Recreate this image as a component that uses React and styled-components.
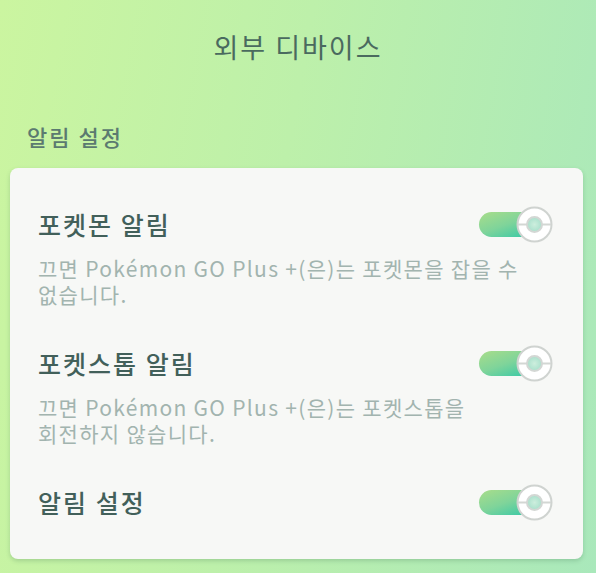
import React from "react";
import styled, { createGlobalStyle } from "styled-components";

const Global = createGlobalStyle`
  html, body { margin: 0; padding: 0; }
  body {
    width: 596px;
    height: 573px;
    overflow: hidden;
    font-family: "Noto Sans CJK KR", "Noto Sans", sans-serif;
    background: linear-gradient(100deg, #cbf5a0 0%, #bdf0aa 45%, #a9e8bb 100%);
  }
`;

const Page = styled.div`
  width: 596px;
  height: 573px;
  display: flex;
  flex-direction: column;
  box-sizing: border-box;
  padding-top: 29px;
`;

const Title = styled.h1`
  margin: 0;
  font-size: 27px;
  font-weight: 400;
  line-height: 36px;
  text-align: center;
  color: #4a6a5f;
  letter-spacing: 2px;
`;

const SectionLabel = styled.div`
  margin: 57px 0 0 27px;
  font-size: 22px;
  font-weight: 500;
  line-height: 28px;
  color: #5b7a70;
  letter-spacing: 2px;
`;

const Card = styled.div`
  margin: 18px 13px 0 10px;
  background: #f7f8f6;
  border-radius: 8px;
  box-shadow: 0 2px 4px rgba(60, 110, 80, 0.25);
  padding: 40px 30px 41px 28px;
  display: flex;
  flex-direction: column;
  gap: 40px;
`;

const Row = styled.div`
  display: flex;
  flex-direction: column;
`;

const RowHead = styled.div`
  display: flex;
  align-items: center;
  justify-content: space-between;
  height: 32px;
`;

const RowTitle = styled.div`
  font-size: 25px;
  font-weight: 500;
  line-height: 32px;
  color: #42605a;
  letter-spacing: 2px;
`;

const Desc = styled.div`
  margin-top: 15px;
  font-size: 21px;
  line-height: 26px;
  color: #a2b4af;
  letter-spacing: 1.3px;
`;

const ToggleWrap = styled.div`
  position: relative;
  width: 74px;
  height: 32px;
  flex-shrink: 0;
`;

const Track = styled.div`
  position: absolute;
  left: 0;
  top: 4px;
  width: 54px;
  height: 25px;
  border-radius: 13px;
  background: linear-gradient(160deg, #a9dd8a 0%, #7fd49a 50%, #33c8a8 100%);
`;

const Knob = styled.svg`
  position: absolute;
  right: 0;
  top: -2px;
`;

function Toggle() {
  return (
    <ToggleWrap>
      <Track />
      <Knob width="37" height="37" viewBox="0 0 37 37">
        <defs>
          <radialGradient id="kc" cx="50%" cy="50%" r="50%">
            <stop offset="0%" stopColor="#cdeedd" />
            <stop offset="100%" stopColor="#a9e0cc" />
          </radialGradient>
        </defs>
        <circle cx="18.5" cy="18.5" r="17" fill="#ffffff" stroke="#cfd3d0" strokeWidth="2" />
        <line x1="2" y1="18.5" x2="35" y2="18.5" stroke="#d3d7d4" strokeWidth="2" />
        <circle cx="18.5" cy="18.5" r="7.5" fill="url(#kc)" stroke="#d3d7d4" strokeWidth="2" />
      </Knob>
    </ToggleWrap>
  );
}

const rows = [
  {
    title: "포켓몬 알림",
    desc: ["끄면 Pokémon GO Plus +(은)는 포켓몬을 잡을 수", "없습니다."],
  },
  {
    title: "포켓스톱 알림",
    desc: ["끄면 Pokémon GO Plus +(은)는 포켓스톱을", "회전하지 않습니다."],
  },
  { title: "알림 설정" },
];

export default function App() {
  return (
    <Page>
      <Global />
      <Title>외부 디바이스</Title>
      <SectionLabel>알림 설정</SectionLabel>
      <Card>
        {rows.map((r) => (
          <Row key={r.title}>
            <RowHead>
              <RowTitle>{r.title}</RowTitle>
              <Toggle />
            </RowHead>
            {r.desc && (
              <Desc>
                {r.desc[0]}
                <br />
                {r.desc[1]}
              </Desc>
            )}
          </Row>
        ))}
      </Card>
    </Page>
  );
}
